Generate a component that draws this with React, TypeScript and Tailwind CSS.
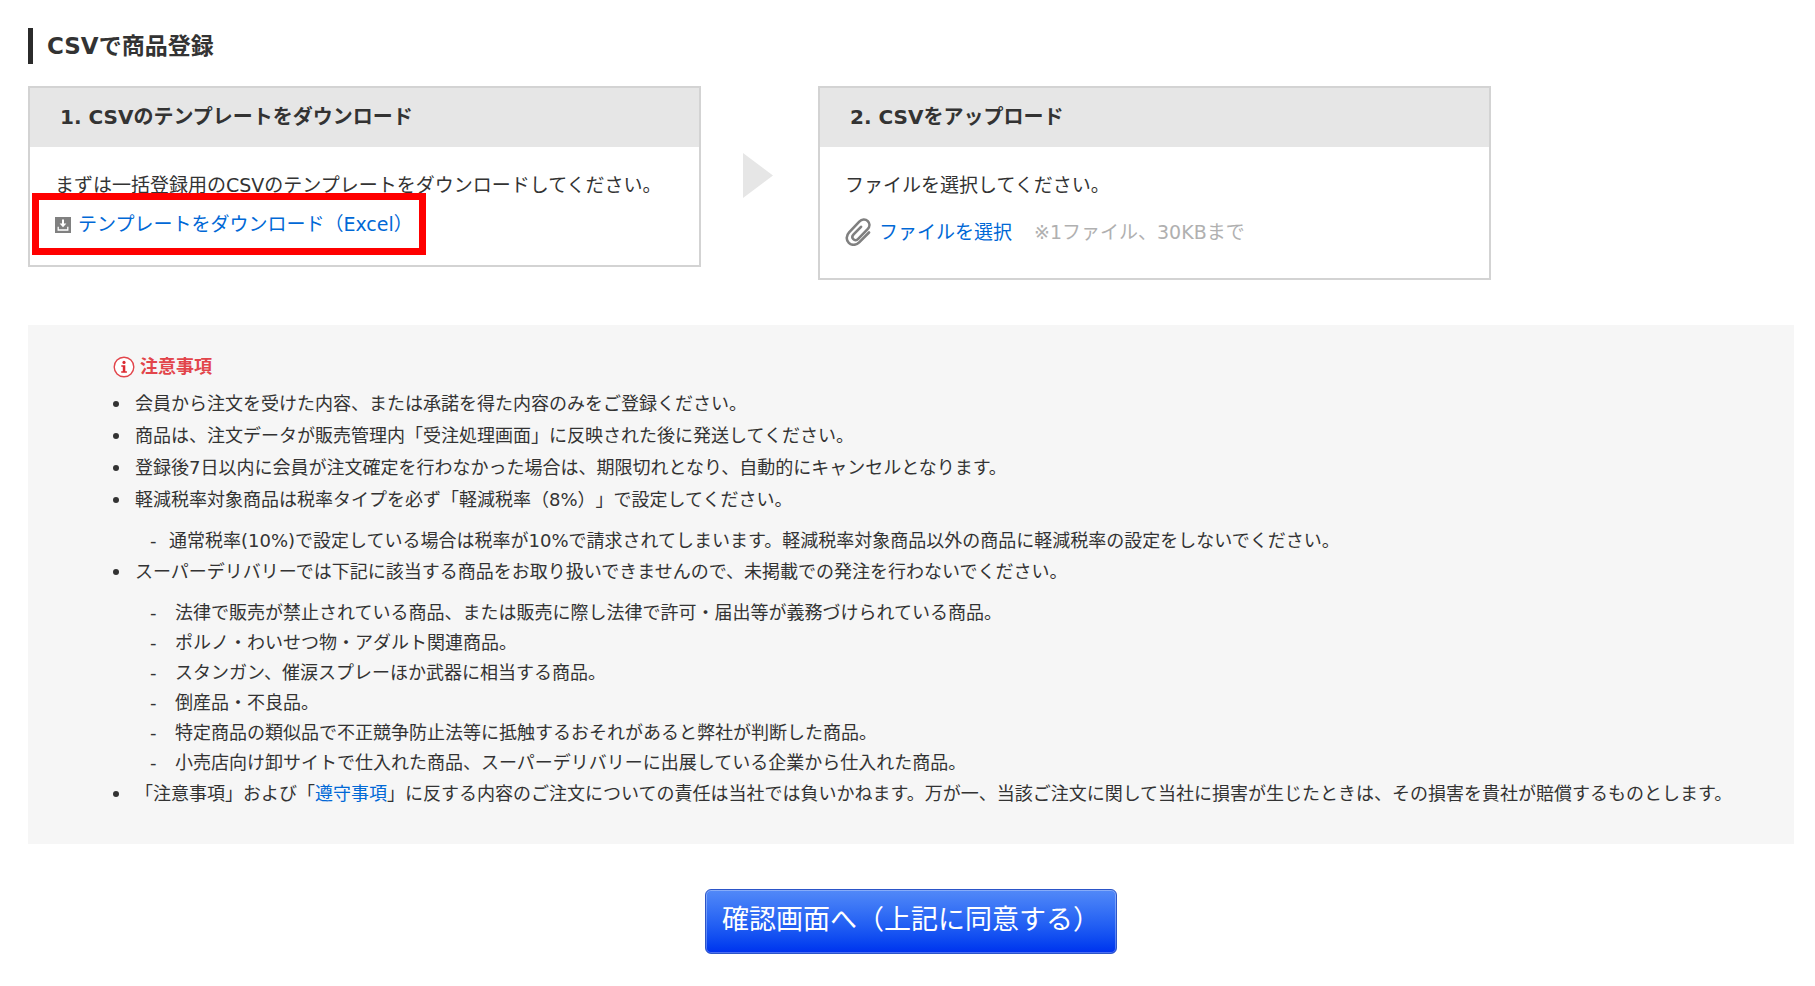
import type { ReactNode } from "react";

function StepCard({ title, className, children }: { title: string; className: string; children: ReactNode }) {
  return (
    <section className={`relative w-[673px] border-2 border-[#d3d3d3] text-[19px] ${className}`}>
      <h2 className="bg-[#e6e6e6] pb-[1px] pl-[30px] text-[20px] leading-[58px] font-bold text-[#333]">{title}</h2>
      <div className="px-[25px] pt-[23px]">{children}</div>
    </section>
  );
}

function DownloadIcon() {
  return (
    <svg aria-hidden="true" className="mt-[2px] size-[16px] shrink-0" viewBox="0 0 16 16">
      <rect width="16" height="16" fill="#808080" />
      <path d="M8 2.5v6" fill="none" stroke="#fff" strokeWidth="2" />
      <path d="M4.6 6.6h6.8L8 10.2z" fill="#fff" />
      <path d="M3.2 9.8v3.2h9.6V9.8" fill="none" stroke="#fff" strokeWidth="1.3" />
    </svg>
  );
}

function ClipIcon() {
  return (
    <svg aria-hidden="true" className="h-[28px] w-[26px] shrink-0" viewBox="0 0 26 28" fill="none" stroke="#808080" strokeLinecap="round">
      <path
        d="M24 14.5 14.2 24.4C11.2 27.4 6.6 27.6 3.8 24.9C.9 22.1 1.1 17.6 4.1 14.4L14.3 3.6C16.8 1 20.5.9 22.8 3.1C25.1 5.4 24.9 8.7 22.6 11.2L13.2 20.9C11.7 22.4 9.6 22.5 8.3 21.2C7 19.9 7.2 17.9 8.6 16.4L16 8.8"
        strokeWidth="2.6"
      />
    </svg>
  );
}

function InfoIcon() {
  return (
    <svg aria-hidden="true" className="size-[22px] shrink-0" viewBox="0 0 22 22">
      <circle cx="11" cy="11" r="9.8" fill="#fff" stroke="#e2454b" strokeWidth="1.4" />
      <circle cx="11" cy="6.4" r="1.6" fill="#dc2b32" />
      <path d="M8.3 9.2h4v6h1.6v1.5H8.2v-1.5h1.6v-4.5H8.3z" fill="#dc2b32" />
    </svg>
  );
}

function Note({ children, sub }: { children: ReactNode; sub?: ReactNode }) {
  return (
    <li>
      <div className="flex items-center leading-[32px]">
        <span aria-hidden="true" className="mr-[16px] size-[6px] shrink-0 rounded-full bg-[#333]" />
        <p>{children}</p>
      </div>
      {sub && <ul className="mt-[10px] pl-[37px] leading-[30px]">{sub}</ul>}
    </li>
  );
}

function SubNote({ children, dash = "w-[25px]" }: { children: ReactNode; dash?: string }) {
  return (
    <li className="flex">
      <span className={`shrink-0 ${dash}`}>-</span>
      <p>{children}</p>
    </li>
  );
}

const prohibited = [
  "法律で販売が禁止されている商品、または販売に際し法律で許可・届出等が義務づけられている商品。",
  "ポルノ・わいせつ物・アダルト関連商品。",
  "スタンガン、催涙スプレーほか武器に相当する商品。",
  "倒産品・不良品。",
  "特定商品の類似品で不正競争防止法等に抵触するおそれがあると弊社が判断した商品。",
  "小売店向け卸サイトで仕入れた商品、スーパーデリバリーに出展している企業から仕入れた商品。",
];

export default function App() {
  return (
    <main className="min-h-screen bg-white pt-[28px] pr-[21px] pb-8 pl-[28px] font-['DejaVu_Sans','Noto_Sans_CJK_JP',sans-serif] text-[#333] [text-spacing-trim:space-all]">
      <h1 className="border-l-[5px] border-[#2b2b2b] pl-[14px] text-[23px] leading-[36px] font-bold">CSVで商品登録</h1>

      <div className="mt-[22px] flex items-start">
        <StepCard title="1. CSVのテンプレートをダウンロード" className="pb-[26px]">
          <p className="leading-[30px]">まずは一括登録用のCSVのテンプレートをダウンロードしてください。</p>
          <a href="#template" className="mt-[9px] flex items-center gap-[7px] leading-[30px] text-[#0068d6]">
            <DownloadIcon />
            テンプレートをダウンロード（Excel）
          </a>
          <div className="pointer-events-none absolute top-[105px] left-[2px] h-[62px] w-[394px] border-[7px] border-[#ff0000]" />
        </StepCard>

        <svg aria-hidden="true" className="mr-[45px] ml-[42px] mt-[67px] h-[45px] w-[30px] shrink-0" viewBox="0 0 30 45">
          <path d="M0 0 30 22.5 0 45z" fill="#e6e6e6" />
        </svg>

        <StepCard title="2. CSVをアップロード" className="pb-[31px]">
          <p className="leading-[30px]">ファイルを選択してください。</p>
          <div className="mt-[17px] flex items-center leading-[30px]">
            <label htmlFor="csv-file" className="flex cursor-pointer items-center gap-[8px] text-[#0068d6]">
              <ClipIcon />
              ファイルを選択
            </label>
            <input id="csv-file" type="file" accept=".csv" className="sr-only" />
            <span className="ml-[22px] text-[#b0b0b0]">※1ファイル、30KBまで</span>
          </div>
        </StepCard>
      </div>

      <section className="mt-[45px] bg-[#f6f6f6] pt-[25px] pr-[24px] pb-[34px] pl-[85px] text-[18px]">
        <h2 className="mb-[5px] flex items-center gap-[5px] leading-[33px] font-bold text-[#e2454b]">
          <InfoIcon />
          注意事項
        </h2>
        <ul>
          <Note>会員から注文を受けた内容、または承諾を得た内容のみをご登録ください。</Note>
          <Note>商品は、注文データが販売管理内「受注処理画面」に反映された後に発送してください。</Note>
          <Note>登録後7日以内に会員が注文確定を行わなかった場合は、期限切れとなり、自動的にキャンセルとなります。</Note>
          <Note
            sub={
              <SubNote dash="w-[19px]">
                通常税率(10%)で設定している場合は税率が10%で請求されてしまいます。軽減税率対象商品以外の商品に軽減税率の設定をしないでください。
              </SubNote>
            }
          >
            軽減税率対象商品は税率タイプを必ず「軽減税率（8%）」で設定してください。
          </Note>
          <Note sub={prohibited.map((text) => <SubNote key={text}>{text}</SubNote>)}>
            スーパーデリバリーでは下記に該当する商品をお取り扱いできませんので、未掲載での発注を行わないでください。
          </Note>
          <Note>
            「注意事項」および「<a href="#terms" className="text-[#0068d6]">遵守事項</a>
            」に反する内容のご注文についての責任は当社では負いかねます。万が一、当該ご注文に関して当社に損害が生じたときは、その損害を貴社が賠償するものとします。
          </Note>
        </ul>
      </section>

      <div className="mt-[45px] flex justify-center">
        <button
          type="button"
          className="cursor-pointer rounded-[6px] border border-[#2c55c8] bg-linear-to-b from-[#5289f8] to-[#0030ee] px-[16px] pb-[3px] text-[27px] leading-[60px] text-white shadow-[inset_0_0_0_1px_rgba(255,255,255,0.3)]"
        >
          確認画面へ（上記に同意する）
        </button>
      </div>
    </main>
  );
}
